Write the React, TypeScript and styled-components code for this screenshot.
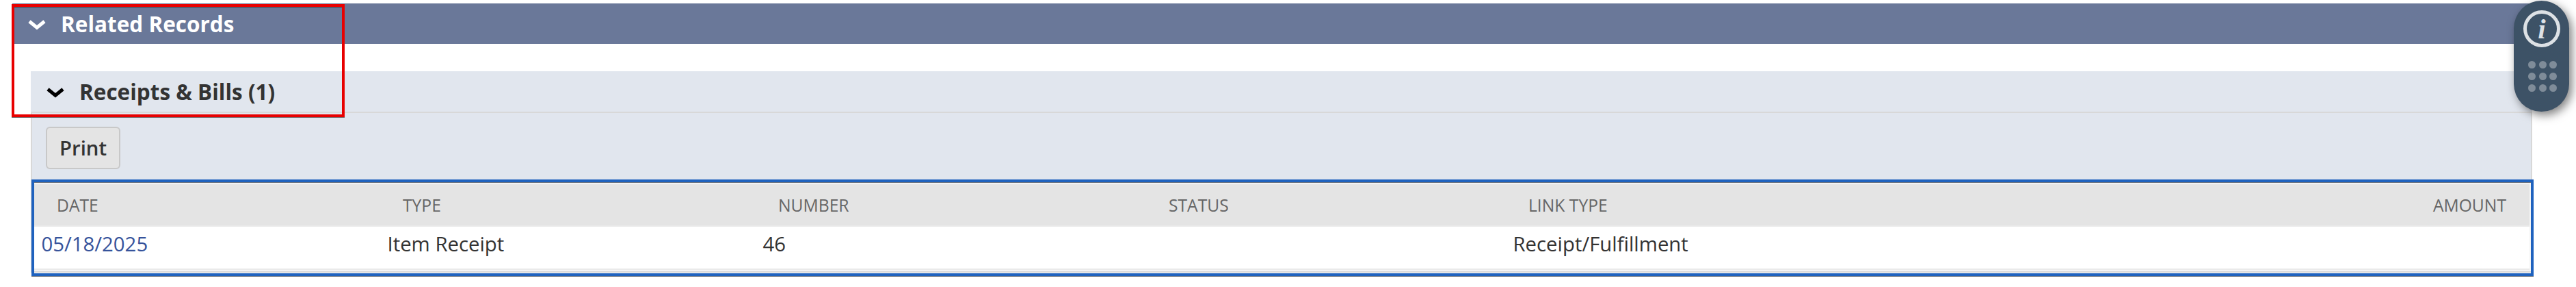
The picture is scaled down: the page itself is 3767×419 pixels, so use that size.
import styled, { createGlobalStyle } from "styled-components";

interface ColumnType {
  label: string;
  value: string;
  isLink?: boolean;
  alignRight?: boolean;
}

interface CellPropsType {
  $alignRight?: boolean;
}

interface ChevronProps {
  color: string;
}

const columns: Array<ColumnType> = [
  { label: "Date", value: "05/18/2025", isLink: true },
  { label: "Type", value: "Item Receipt" },
  { label: "Number", value: "46" },
  { label: "Status", value: "" },
  { label: "Link Type", value: "Receipt/Fulfillment" },
  { label: "Amount", value: "", alignRight: true },
];

const GlobalStyle = createGlobalStyle`
  * {
    box-sizing: border-box;
  }

  body {
    margin: 0;
    background: #ffffff;
    font-family: "Open Sans", sans-serif;
    color: #333333;
  }
`;

const Page = styled.main`
  position: relative;
  width: 3767px;
  height: 419px;
  padding: 5px 37px 0 18px;
  overflow: hidden;
`;

const SectionHeader = styled.header`
  display: flex;
  align-items: center;
  gap: 21px;
  height: 59px;
  padding-left: 22px;
  color: #ffffff;
  background: #6a7899;
`;

const Heading = styled.h2`
  margin: 0;
  font-size: 31.5px;
  line-height: 44px;
  font-weight: 700;
  white-space: nowrap;
`;

const Panel = styled.section`
  margin: 40px 27px 0;
  background: #e1e6ee;
`;

const PanelHeader = styled.div`
  display: flex;
  align-items: center;
  gap: 21px;
  height: 59px;
  padding-left: 22px;
`;

const PanelBody = styled.div`
  border: 2px solid #d8d8d8;
`;

const Toolbar = styled.div`
  display: flex;
  height: 102px;
  padding: 20px 0 0 20px;
`;

const Button = styled.button`
  width: 109px;
  height: 62px;
  padding: 0;
  border: 2px solid #c8c8c8;
  border-radius: 6px;
  background: #e4e4e4;
  color: #333333;
  font-family: inherit;
  font-size: 29.33px;
  line-height: 40px;
  font-weight: 600;
`;

const Table = styled.div`
  border: 2px solid #f3f3f4;
  background: #ffffff;
`;

const Row = styled.div`
  display: grid;
  grid-template-columns: 506px 549px 571px 526px 1fr 400px;
  height: 63px;
  padding-left: 11.5px;
  border-bottom: 2px solid #eaeaea;
`;

const HeaderRow = styled(Row)`
  height: 62px;
  background: #e4e4e4;
`;

const HeaderCell = styled.div<CellPropsType>`
  padding: 0 34px 0 22.5px;
  color: #666666;
  font-size: 24.67px;
  line-height: 61px;
  text-align: ${(props) => (props.$alignRight ? "right" : "left")};
  text-transform: uppercase;
`;

const Cell = styled.div`
  font-size: 29.33px;
  line-height: 50px;
`;

const CellLink = styled.a`
  color: #36539b;
`;

const RedHighlight = styled.div`
  position: absolute;
  top: 6px;
  left: 17px;
  width: 487px;
  height: 165px;
  border: 4px solid #e80000;
  box-shadow: 0 1px 0 #7b6d70, inset 0 1px 0 #45434f;
`;

const BlueHighlight = styled.div`
  position: absolute;
  top: 262px;
  left: 46px;
  width: 3659px;
  height: 141px;
  border: 4px solid #1f62be;
  box-shadow: 0 1px 0 #70757e, inset 0 1px 0 #70757e;
`;

const FloatingMenu = styled.aside`
  position: absolute;
  top: 1px;
  left: 3676px;
  display: flex;
  flex-direction: column;
  align-items: center;
  gap: 20px;
  width: 81px;
  height: 162px;
  padding-top: 14px;
  border-radius: 41px;
  background: #3d5266;
  box-shadow: 4px 5px 14px rgba(0, 0, 0, 0.5);
`;

const InfoBadge = styled.div`
  width: 54px;
  height: 54px;
  padding-left: 1px;
  border: 5px solid #dde1e5;
  border-radius: 50%;
  color: #dde1e5;
  font: italic 700 41px/44px "Liberation Serif", serif;
  text-align: center;
`;

const DotGrid = styled.div`
  display: grid;
  grid-template-columns: repeat(3, 11px);
  gap: 6px 4.7px;
  margin-left: 3px;
`;

const Dot = styled.span`
  width: 11px;
  height: 11px;
  border-radius: 50%;
  background: #7f8c99;
`;

const Chevron: React.FC<ChevronProps> = ({ color }) => (
  <svg width="28" height="20" viewBox="0 0 28 20" fill="none">
    <path d="M3 6.3 L14 15.3 L25 6.3" stroke={color} strokeWidth="5" />
  </svg>
);

const App: React.FC = () => {
  return (
    <>
      <GlobalStyle />
      <Page>
        <SectionHeader>
          <Chevron color="#ffffff" />
          <Heading>Related Records</Heading>
        </SectionHeader>
        <Panel>
          <PanelHeader>
            <Chevron color="#000000" />
            <Heading>Receipts &amp; Bills (1)</Heading>
          </PanelHeader>
          <PanelBody>
            <Toolbar>
              <Button type="button">Print</Button>
            </Toolbar>
            <Table>
              <HeaderRow>
                {columns.map(({ label, alignRight }) => (
                  <HeaderCell key={label} $alignRight={alignRight}>
                    {label}
                  </HeaderCell>
                ))}
              </HeaderRow>
              <Row>
                {columns.map(({ label, value, isLink }) => (
                  <Cell key={label}>
                    {isLink ? <CellLink>{value}</CellLink> : value}
                  </Cell>
                ))}
              </Row>
            </Table>
          </PanelBody>
        </Panel>
        <RedHighlight />
        <BlueHighlight />
        <FloatingMenu>
          <InfoBadge>i</InfoBadge>
          <DotGrid>
            {Array.from({ length: 9 }, (_, index) => (
              <Dot key={index} />
            ))}
          </DotGrid>
        </FloatingMenu>
      </Page>
    </>
  );
};

export default App;
